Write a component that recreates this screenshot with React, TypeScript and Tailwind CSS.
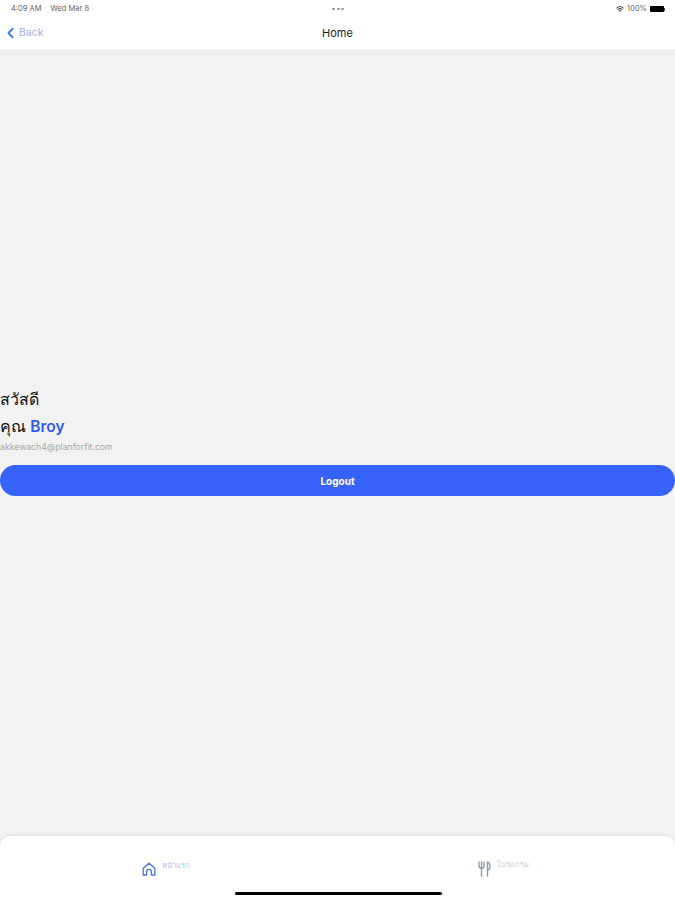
import { ChevronLeft, Wifi } from "lucide-react";

const font = { sans: "font-['Inter','Noto_Sans','Noto_Sans_CJK_SC',sans-serif]" };

function HomeIcon() {
  return (
    <svg width="14" height="14" viewBox="0 0 14 14" fill="none" stroke="#4a6ff0" strokeWidth="1.3" strokeLinejoin="round" strokeLinecap="round">
      <path d="M1.2 13V6.2L7 1.2l5.8 5V13H9.4V9.8a2.4 2.4 0 0 0-4.8 0V13H1.2Z" />
    </svg>
  );
}

function FoodIcon() {
  return (
    <svg width="13" height="16" viewBox="0 0 13 16" fill="none" stroke="#8f9ab0" strokeWidth="1.4" strokeLinecap="round" strokeLinejoin="round">
      <path d="M1 1v4a2 2 0 0 0 2 2h1a2 2 0 0 0 2-2V1M3.5 1v14" />
      <path d="M9.5 15V1c1.7.6 2.5 2.6 2.5 5 0 1.6-.8 2.6-2.5 2.8" />
    </svg>
  );
}

export default function App() {
  return (
    <div className={`${font.sans} relative flex h-[900px] w-[675px] flex-col overflow-hidden bg-[#f2f2f2]`}>
      {/* Header */}
      <header className="h-[49px] bg-white">
        <div className="flex h-[17px] items-center justify-between pl-[11px] pr-[10px] pt-[1px] text-[7.5px] text-[#666]">
          <div className="flex w-[120px] gap-[9px] whitespace-nowrap">
            <span>4:09 AM</span>
            <span>Wed Mar 8</span>
          </div>
          <div className="flex gap-[1.5px]">
            <span className="h-[2px] w-[3px] rounded-full bg-[#999]"></span>
            <span className="h-[2px] w-[3px] rounded-full bg-[#999]"></span>
            <span className="h-[2px] w-[3px] rounded-full bg-[#999]"></span>
          </div>
          <div className="flex w-[120px] items-center justify-end gap-[3px]">
            <Wifi className="h-[8px] w-[8px] text-[#444]" strokeWidth={3} />
            <span>100%</span>
            <div className="flex items-center">
              <span className="h-[6px] w-[14px] rounded-[1px] bg-black"></span>
              <span className="h-[3px] w-[1px] bg-[#555]"></span>
            </div>
          </div>
        </div>
        <div className="relative flex h-[32px] items-center justify-center pt-[1px]">
          <div className="absolute left-[2px] top-[7px] flex items-center text-[#9db0f5]">
            <ChevronLeft className="h-[18px] w-[17px] text-[#3b7be8]" strokeWidth={2.5} />
            <span className="text-[10.5px]">Back</span>
          </div>
          <span className="text-[11px] text-[#222]">Home</span>
        </div>
      </header>

      {/* Content */}
      <main className="flex flex-1 flex-col justify-center pb-[3px]">
        <div className="flex flex-col">
          <p className="text-[16px] leading-[27px] font-medium text-[#111]">สวัสดี</p>
          <p className="text-[16px] leading-[27px] font-medium text-[#111]">
            คุณ <span className="text-[15.5px] font-semibold text-[#2f5bf0]">Broy</span>
          </p>
          <p className="text-[8.7px] leading-[14px] text-[#a8a8a8]">akkewach4@planforfit.com</p>
          <button className="mt-[11px] flex h-[31px] items-center justify-center rounded-full bg-[#3762fb] pt-[1px] text-[10px] font-bold text-white">
            Logout
          </button>
        </div>
      </main>

      {/* Bottom tabs */}
      <nav className="flex h-[64px] items-start rounded-t-[10px] bg-white shadow-[0_-1px_3px_rgba(0,0,0,0.08)]">
        <div className="ml-[142px] mt-[26px] flex w-[336px] items-start gap-[6px]">
          <HomeIcon />
          <span className="text-[7.5px] leading-[8px] text-[#b4c1f4]">หน้าแรก</span>
        </div>
        <div className="mt-[25px] flex items-start gap-[6px]">
          <FoodIcon />
          <span className="text-[7.5px] leading-[8px] text-[#c9cfdb]">โปรแกรม</span>
        </div>
      </nav>
      <div className="absolute bottom-[5px] left-[235px] h-[3px] w-[207px] rounded-full bg-black"></div>
    </div>
  );
}
